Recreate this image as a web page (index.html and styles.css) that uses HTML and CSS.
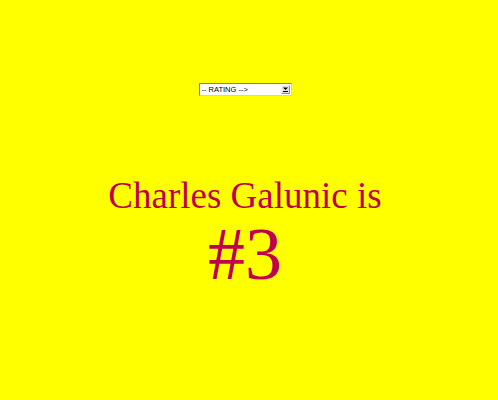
FILE: index.html
```html
<!DOCTYPE html>
<html>
<head>
<meta charset="utf-8">
<link rel="stylesheet" href="styles.css">
</head>
<body>
<div class="page">
  <form class="rating-form">
    <div class="select-wrap">
      <select class="rating-select">
        <option>-- RATING --&gt;</option>
      </select>
      <span class="select-button"><svg width="7" height="5" viewBox="0 0 7 5"><path d="M1 0.5h5l-2.5 2.5z" fill="#000"/><rect x="1" y="4" width="5" height="1" fill="#000"/></svg></span>
    </div>
  </form>
  <div class="result">
    <div class="name">Charles Galunic is</div>
    <div class="rank">#3</div>
  </div>
</div>
</body>
</html>
```
FILE: styles.css
```css
html, body {
  margin: 0;
  padding: 0;
  background: #ffff00;
}
.page {
  width: 490px;
  height: 400px;
  display: flex;
  flex-direction: column;
  align-items: center;
  font-family: "Liberation Serif", "Times New Roman", serif;
}
.rating-form {
  margin: 83px 0 0 0;
  display: flex;
  justify-content: center;
}
.select-wrap {
  position: relative;
  width: 93px;
  height: 13px;
}
.rating-select {
  -webkit-appearance: none;
  appearance: none;
  display: block;
  box-sizing: border-box;
  width: 93px;
  height: 13px;
  font-family: "Liberation Sans", Arial, sans-serif;
  font-size: 7.5px;
  line-height: 11px;
  padding: 0 0 0 2px;
  margin: 0;
  border-top: 1px solid #808080;
  border-left: 1px solid #808080;
  border-right: 1px solid #d4d0c8;
  border-bottom: 1px solid #d4d0c8;
  background: #fff;
  color: #000;
  border-radius: 0;
}
.select-button {
  position: absolute;
  right: 2px;
  top: 2px;
  width: 9px;
  height: 9px;
  box-sizing: border-box;
  background: #e4e2dc;
  border-top: 1px solid #f4f4f4;
  border-left: 1px solid #f4f4f4;
  border-right: 1px solid #909090;
  border-bottom: 1px solid #909090;
  display: flex;
  align-items: center;
  justify-content: center;
  pointer-events: none;
}
.result {
  margin-top: 80px;
  display: flex;
  flex-direction: column;
  align-items: center;
  color: #c0004e;
}
.name {
  font-size: 37px;
  line-height: 40px;
}
.rank {
  font-size: 74px;
  line-height: 76px;
}
```
